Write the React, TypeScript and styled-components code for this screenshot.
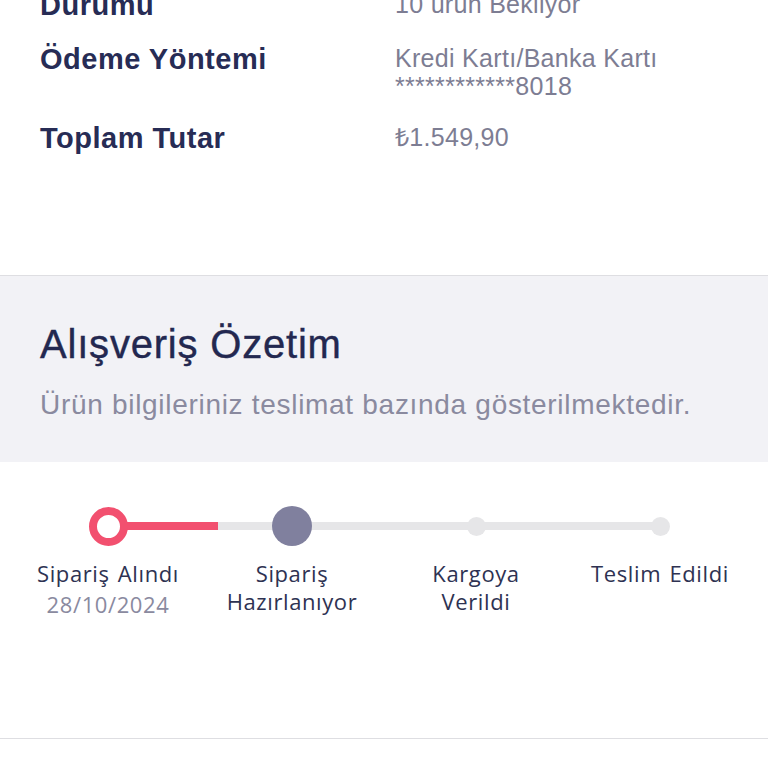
import styled, { createGlobalStyle } from "styled-components";

const GlobalStyle = createGlobalStyle`
  html, body {
    margin: 0;
    padding: 0;
    background: #ffffff;
    overflow: hidden;
  }
  body {
    font-family: "Liberation Sans", Arial, sans-serif;
  }
`;

type InfoRow = { label: string; values: string[] };

const infoRows: InfoRow[] = [
  { label: "Durumu", values: ["10 ürün Bekliyor"] },
  { label: "Ödeme Yöntemi", values: ["Kredi Kartı/Banka Kartı", "************8018"] },
  { label: "Toplam Tutar", values: ["₺1.549,90"] },
];

type Step = { title: string[]; date?: string; state: "done" | "current" | "todo" };

const steps: Step[] = [
  { title: ["Sipariş Alındı"], date: "28/10/2024", state: "done" },
  { title: ["Sipariş", "Hazırlanıyor"], state: "current" },
  { title: ["Kargoya", "Verildi"], state: "todo" },
  { title: ["Teslim Edildi"], state: "todo" },
];

const Page = styled.div`
  width: 768px;
  height: 768px;
  overflow: hidden;
`;

const Details = styled.section`
  margin-top: -11px;
  height: 287px;
  box-sizing: border-box;
  border-bottom: 1px solid #dedee2;
  padding: 0 40px;
  display: flex;
  flex-direction: column;
  gap: 22px;
`;

const Row = styled.div`
  display: grid;
  grid-template-columns: 355px 1fr;
  align-items: start;
`;

const Label = styled.div`
  font-size: 29px;
  line-height: 32px;
  font-weight: 700;
  color: #272c55;
  letter-spacing: 0.5px;
`;

const Values = styled.div`
  display: flex;
  flex-direction: column;
  padding-top: 1px;
`;

const Value = styled.div`
  font-size: 25px;
  line-height: 28px;
  color: #7d7d93;
  letter-spacing: 0.3px;
`;

const Summary = styled.section`
  background: #f2f2f6;
  height: 186px;
  box-sizing: border-box;
  padding: 45px 40px 0;
`;

const Title = styled.h2`
  margin: 0;
  font-size: 40px;
  line-height: 46px;
  font-weight: 400;
  color: #232850;
  letter-spacing: 0.8px;
  -webkit-text-stroke: 0.4px #232850;
`;

const Subtitle = styled.p`
  margin: 22px 0 0;
  font-size: 28px;
  line-height: 32px;
  color: #8a8a9f;
  letter-spacing: 0.7px;
`;

const Progress = styled.section`
  height: 277px;
  box-sizing: border-box;
  border-bottom: 1px solid #dedee2;
  padding: 44px 16px 0;
`;

const Track = styled.div`
  position: relative;
  display: grid;
  grid-template-columns: repeat(4, 1fr);
  height: 40px;

  &::before {
    content: "";
    position: absolute;
    top: 16px;
    left: 92px;
    right: 92px;
    height: 8px;
    border-radius: 4px;
    background: linear-gradient(to right, #f2506f 0 110px, #e6e6e8 110px);
  }
`;

const MarkerCell = styled.div`
  display: flex;
  align-items: center;
  justify-content: center;
  position: relative;
  z-index: 1;
`;

const Marker = styled.span<{ $state: Step["state"] }>`
  box-sizing: border-box;
  border-radius: 50%;
  ${({ $state }) =>
    $state === "done"
      ? `width: 39px; height: 39px; border: 8px solid #f2506f; background: #ffffff;`
      : $state === "current"
      ? `width: 40px; height: 40px; background: #80809e;`
      : `width: 19px; height: 19px; background: #e6e6e8;`}
`;

const Labels = styled.div`
  display: grid;
  grid-template-columns: repeat(4, 1fr);
  margin-top: 13px;
`;

const StepText = styled.div`
  display: flex;
  flex-direction: column;
  align-items: center;
  text-align: center;
  font-family: "Open Sans", "Noto Sans", sans-serif;
`;

const StepTitle = styled.div`
  font-size: 22px;
  line-height: 28px;
  color: #2e3252;
  letter-spacing: 0.6px;
  word-spacing: 2px;
  white-space: nowrap;
`;

const StepDate = styled.div`
  margin-top: 3px;
  font-size: 22px;
  line-height: 28px;
  color: #8a8a9f;
  letter-spacing: 0.6px;
`;

export default function App() {
  return (
    <Page>
      <GlobalStyle />
      <Details>
        {infoRows.map((row) => (
          <Row key={row.label}>
            <Label>{row.label}</Label>
            <Values>
              {row.values.map((v) => (
                <Value key={v}>{v}</Value>
              ))}
            </Values>
          </Row>
        ))}
      </Details>
      <Summary>
        <Title>Alışveriş Özetim</Title>
        <Subtitle>Ürün bilgileriniz teslimat bazında gösterilmektedir.</Subtitle>
      </Summary>
      <Progress>
        <Track>
          {steps.map((s, i) => (
            <MarkerCell key={i}>
              <Marker $state={s.state} />
            </MarkerCell>
          ))}
        </Track>
        <Labels>
          {steps.map((s, i) => (
            <StepText key={i}>
              {s.title.map((t) => (
                <StepTitle key={t}>{t}</StepTitle>
              ))}
              {s.date && <StepDate>{s.date}</StepDate>}
            </StepText>
          ))}
        </Labels>
      </Progress>
    </Page>
  );
}
